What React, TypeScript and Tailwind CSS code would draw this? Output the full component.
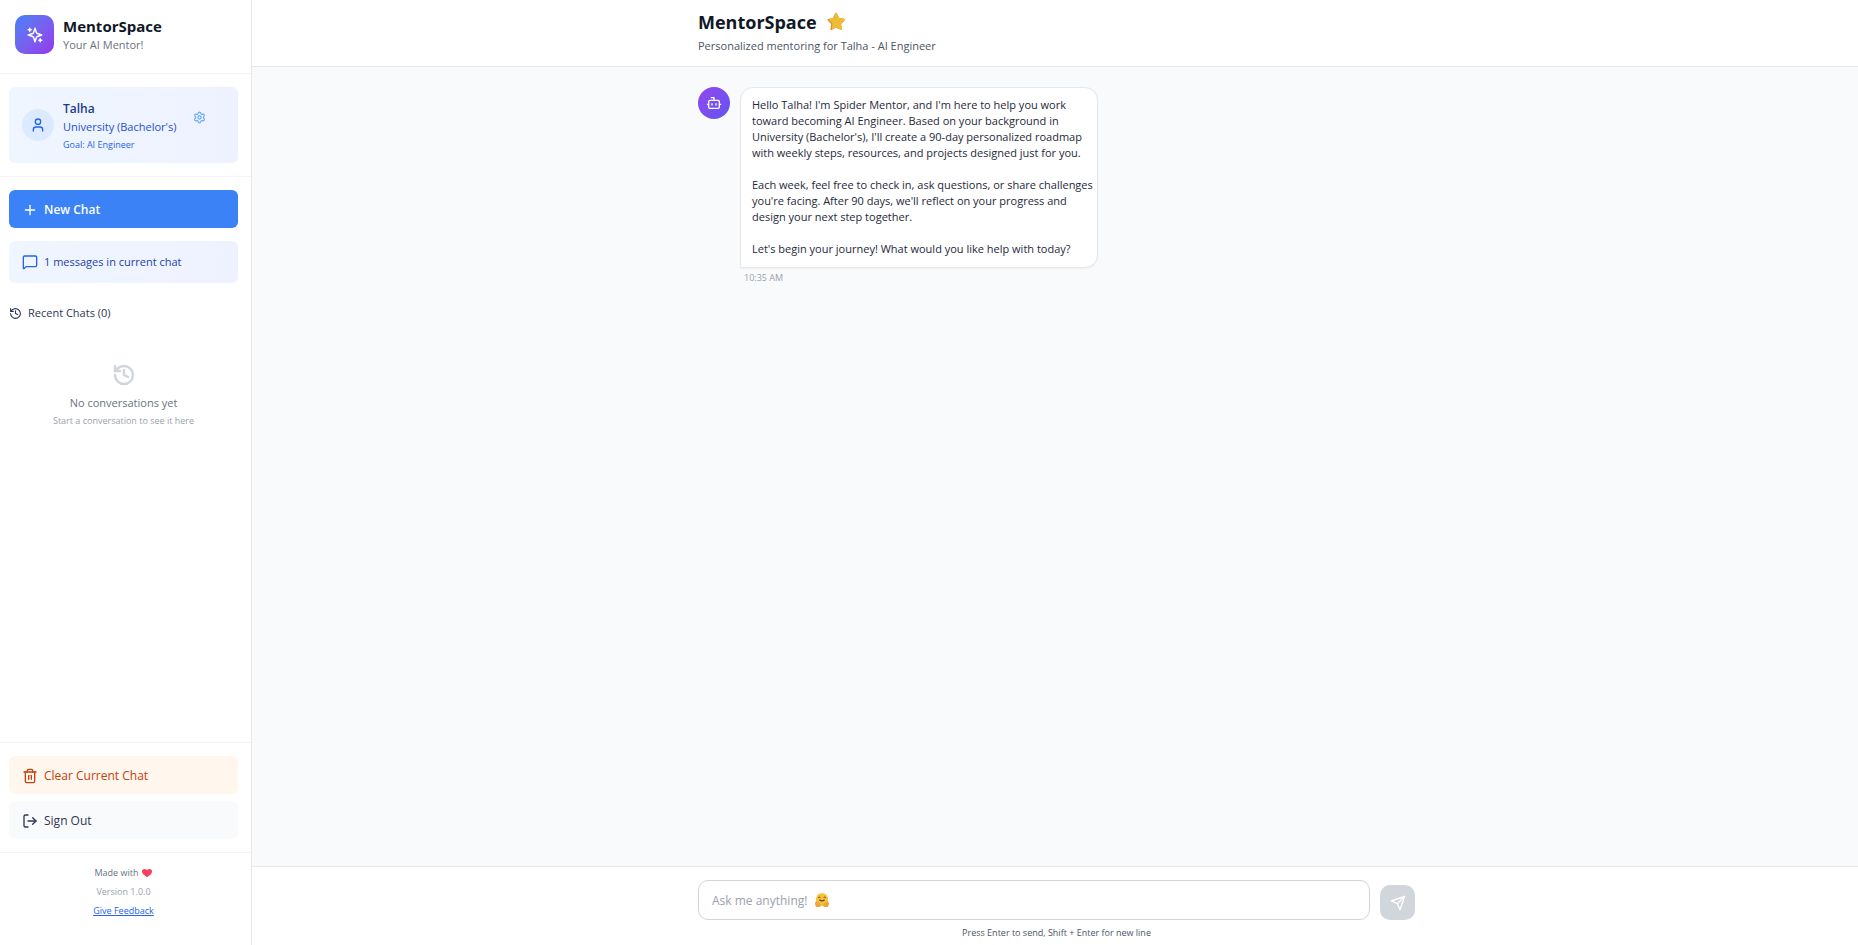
import { useState } from "react"
import { Bot, History, LogOut, MessageSquare, Plus, Settings, Trash2, User } from "lucide-react"

const paragraphs = [
  "Hello Talha! I'm Spider Mentor, and I'm here to help you work toward becoming AI Engineer. Based on your background in University (Bachelor's), I'll create a 90-day personalized roadmap with weekly steps, resources, and projects designed just for you.",
  "Each week, feel free to check in, ask questions, or share challenges you're facing. After 90 days, we'll reflect on your progress and design your next step together.",
  "Let's begin your journey! What would you like help with today?",
]

function SparklesIcon() {
  return (
    <svg viewBox="0 0 24 24" fill="none" stroke="currentColor" strokeWidth="2" strokeLinecap="round" strokeLinejoin="round" className="size-[18px]">
      <path d="m12 3-1.912 5.813a2 2 0 0 1-1.275 1.275L3 12l5.813 1.912a2 2 0 0 1 1.275 1.275L12 21l1.912-5.813a2 2 0 0 1 1.275-1.275L21 12l-5.813-1.912a2 2 0 0 1-1.275-1.275L12 3Z" />
      <path d="M5 3v4M19 17v4M3 5h4M17 19h4" />
    </svg>
  )
}

function SendIcon() {
  return (
    <svg viewBox="0 0 24 24" fill="none" stroke="currentColor" strokeWidth="2" strokeLinecap="round" strokeLinejoin="round" className="size-4">
      <path d="m22 2-7 20-4-9-9-4Z" />
      <path d="M22 2 11 13" />
    </svg>
  )
}

function StarIcon() {
  return (
    <svg viewBox="0 0 20 20" className="size-5" aria-hidden="true">
      <path d="M9.2 1.2q1-.8 1.8.3l2.1 4.4 4.9.9q1.5.4.5 1.6l-3.4 3.5.7 4.9q0 1.5-1.3 1L10 15.6l-4.4 2.3q-1.3.5-1.2-1l.8-4.9-3.5-3.5q-1-1.2.5-1.6l4.9-.8z" fill="#d98e2b" />
      <path d="M10.2 1.2q.6 0 1 .5l2.1 4.2 4.7.8q1.5.4.5 1.6l-3.3 3.4.7 4.8q0 1.2-1 1l-4.5-2.3-3.9 2q-.9.3-.8-.8l.8-4.800L3.2 8.2q-.9-1.100.5-1.400L8.200 6l1.200-4.200q.3-.6.8-.6z" fill="#f0bc35" />
    </svg>
  )
}

function HeartIcon() {
  return (
    <svg viewBox="0 0 10 8" className="h-2 w-[10px]" aria-hidden="true">
      <path d="M5 8 1.5 5.5Q-.8 3 .3 1 2.200-.8 5 .9 7.800-.8 9.700 1 10.800 3 8.500 5.500z" fill="#f8405f" />
      <path d="M5 8 2.5 6.200Q6 7 9.200 4.700L8.500 5.500z" fill="#e23f9a" />
    </svg>
  )
}

function HugIcon() {
  return (
    <svg viewBox="0 0 14 14" className="size-[14px]" aria-hidden="true">
      <path d="M7 .3c4 0 6 2.700 6 6.700v6H1V7C1 3 3 .3 7 .3z" fill="#f5c33a" />
      <path d="M3.2 4.700q1-1.200 2.200 0M8.600 4.700q1-1.200 2.200 0" fill="none" stroke="#6b3a3c" strokeWidth="1" />
      <path d="M4.4 6.700q2.600 2.400 5.200 0" fill="none" stroke="#7a3440" strokeWidth="1.2" />
      <path d="M0 10q1-2.400 3-.8l2.600 1.700q.8 1.400-.6 3.100H1.200Q0 12.500 0 10zM14 10q-1-2.400-3-.8l-2.600 1.700q-.8 1.400.6 3.100h3.800q1.200-1.500 1.200-4z" fill="#eda63c" />
    </svg>
  )
}

function Sidebar() {
  return (
    <aside className="flex w-[252px] shrink-0 flex-col border-r border-gray-200 bg-white">
      <div className="flex items-center gap-[9px] border-b border-gray-100 px-[15px] pt-[15px] pb-[19px]">
        <div className="flex size-[39px] items-center justify-center rounded-[10px] bg-linear-to-br from-[#3b82f6] to-[#9333ea] text-white">
          <SparklesIcon />
        </div>
        <div>
          <h1 className="text-[15px] leading-5 font-bold text-gray-900">MentorSpace</h1>
          <p className="text-[11px] leading-[18px] text-gray-500">Your AI Mentor!</p>
        </div>
      </div>

      <div className="border-b border-gray-100 py-[13px] pr-[13px] pl-[9px]">
        <div className="flex items-center gap-[9px] rounded-md bg-linear-to-r from-[#eff6ff] to-[#eef2ff] px-[13px] py-[9px]">
          <div className="flex size-8 items-center justify-center rounded-full bg-[#dbeafe] text-[#2563eb]">
            <User className="size-4" />
          </div>
          <div className="flex-1 pt-1">
            <p className="text-[12px] leading-[18px] font-semibold text-[#1e3a8a]">Talha</p>
            <p className="text-[11px] leading-[18px] text-[#1d4ed8]">University (Bachelor's)</p>
            <p className="text-[9px] leading-[18px] text-[#2563eb]">Goal: AI Engineer</p>
          </div>
          <button aria-label="Settings" className="mr-[19px] mb-4 text-[#60a5fa]">
            <Settings className="size-[13px]" />
          </button>
        </div>
      </div>

      <div className="flex flex-1 flex-col pt-[13px] pr-[13px] pl-[9px]">
        <button className="flex h-[38px] items-center gap-[6px] rounded-md bg-[#3b82f6] px-[13px] pt-px text-[12px] font-semibold text-white">
          <Plus className="size-4" />
          New Chat
        </button>
        <div className="mt-[13px] flex h-[42px] items-center gap-[6px] rounded-md bg-linear-to-r from-[#eff6ff] to-[#eef2ff] px-[13px] text-[11px] font-medium text-[#1e40af]">
          <MessageSquare className="size-4 text-[#2563eb]" />
          1 messages in current chat
        </div>
        <h2 className="mt-[22px] flex items-center gap-[6px] text-[11px] leading-4 font-medium text-[#2f3555]">
          <History className="size-[13px]" />
          Recent Chats (0)
        </h2>
        <div className="mt-[42px] flex flex-col items-center text-center">
          <History className="size-6 text-gray-300" strokeWidth={2.5} />
          <p className="mt-2 text-[11px] leading-4 text-gray-500">No conversations yet</p>
          <p className="mt-[2px] text-[9px] leading-4 text-gray-400">Start a conversation to see it here</p>
        </div>
      </div>

      <div className="flex flex-col gap-[7px] border-t border-gray-100 py-[13px] pr-[13px] pl-[9px] text-[12px] font-medium">
        <button className="flex h-[38px] items-center gap-[6px] rounded-md bg-orange-50 px-[13px] pt-px text-[#c2410c]">
          <Trash2 className="size-4" />
          Clear Current Chat
        </button>
        <button className="flex h-[38px] items-center gap-[6px] rounded-md bg-gray-50 px-[13px] pt-px text-[#2f3555]">
          <LogOut className="size-4" />
          Sign Out
        </button>
      </div>

      <div className="flex flex-col items-center gap-[3px] border-t border-gray-100 pt-3 pr-[13px] pb-[26px] pl-[9px] text-[9px] leading-4">
        <p className="flex items-center gap-1 text-gray-500">
          Made with <HeartIcon />
        </p>
        <p className="text-gray-400">Version 1.0.0</p>
        <a href="#feedback" className="text-[#2563eb] underline">Give Feedback</a>
      </div>
    </aside>
  )
}

export default function App() {
  const [message, setMessage] = useState("")

  return (
    <div className="flex h-screen bg-gray-50 font-['Open_Sans',sans-serif]">
      <Sidebar />
      <main className="flex min-w-0 flex-1 flex-col">
        <header className="border-b border-gray-200 bg-white pt-2 pb-3 pl-[3px]">
          <div className="mx-auto max-w-[717px]">
            <h2 className="flex items-center gap-[9px] text-[18px] leading-7 font-bold text-gray-900">
              MentorSpace <StarIcon />
            </h2>
            <p className="mt-[2px] text-[11px] leading-4 text-gray-600">Personalized mentoring for Talha - AI Engineer</p>
          </div>
        </header>

        <div className="flex-1 overflow-y-auto pt-5 pl-[3px]">
          <div className="mx-auto flex max-w-[717px] gap-[10px]">
            <div className="flex size-8 shrink-0 items-center justify-center rounded-full bg-linear-to-br from-[#8f47ee] to-[#6454f1] text-white">
              <Bot className="size-4" />
            </div>
            <div>
              <div className="w-[358px] space-y-4 rounded-[13px] rounded-bl-none border border-gray-200 bg-white pt-[9px] pb-[10px] pl-[11px] text-[11px] leading-4 text-gray-800 shadow-xs">
                {paragraphs.map((text) => (
                  <p key={text}>{text}</p>
                ))}
              </div>
              <p className="mt-[2px] pl-1 text-[9px] leading-4 text-gray-400">10:35 AM</p>
            </div>
          </div>
        </div>

        <footer className="border-t border-gray-200 bg-white pt-[13px] pb-1 pl-[3px]">
          <form className="mx-auto max-w-[717px]" onSubmit={(e) => e.preventDefault()}>
            <div className="flex items-end gap-[10px]">
              <div className="relative flex-1">
                <input
                  aria-label="Message"
                  value={message}
                  onChange={(e) => setMessage(e.target.value)}
                  placeholder="Ask me anything!"
                  className="block h-10 w-full rounded-[10px] border border-gray-300 bg-white px-[13px] text-[12px] text-gray-800 placeholder:text-gray-400"
                />
                {!message && (
                  <span className="pointer-events-none absolute top-[13px] left-[117px]">
                    <HugIcon />
                  </span>
                )}
              </div>
              <button aria-label="Send" className="flex size-[35px] items-center justify-center rounded-[10px] bg-gray-300 text-white">
                <SendIcon />
              </button>
            </div>
            <p className="mt-[5px] text-center text-[9px] leading-4 text-gray-600">Press Enter to send, Shift + Enter for new line</p>
          </form>
        </footer>
      </main>
    </div>
  )
}
